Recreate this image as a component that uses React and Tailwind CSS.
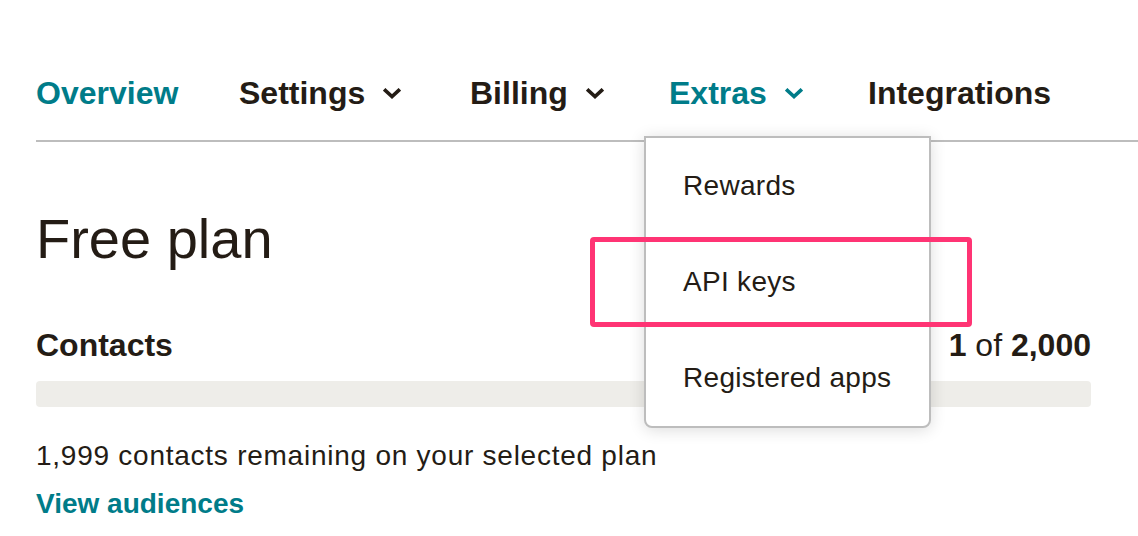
import React from "react";

const Chevron = ({ className }) => (
  <svg width="18" height="11" viewBox="0 0 18 11" className={className}>
    <polyline
      points="2.5,2.5 9,8.5 15.5,2.5"
      fill="none"
      stroke="currentColor"
      strokeWidth="3.6"
      strokeLinecap="square"
    />
  </svg>
);

const NavItem = ({ label, active, dropdown, width, children }) => (
  <div className={`relative flex items-center shrink-0 ${width}`}>
    <span className={`text-[32px] font-bold leading-[40px] ${active ? "text-[#007c89]" : "text-[#241c15]"}`}>
      {label}
    </span>
    {dropdown && (
      <Chevron className={`ml-[18px] ${active ? "text-[#007c89]" : "text-[#241c15]"}`} />
    )}
    {children}
  </div>
);

export default function App() {
  return (
    <div className="w-[1138px] h-[536px] overflow-hidden bg-white text-[#241c15]" style={{ fontFamily: '"Liberation Sans", Arial, sans-serif' }}>
      <div className="ml-[36px]">
        {/* top nav */}
        <nav className="flex items-center pt-[73px] pb-[27px] border-b-2 border-[#bdbdbd]">
          <NavItem label="Overview" active width="w-[203px]" />
          <NavItem label="Settings" dropdown width="w-[231px]" />
          <NavItem label="Billing" dropdown width="w-[199px]" />
          <NavItem label="Extras" dropdown active width="w-[199px]">
            <div className="absolute left-[-25px] top-[calc(100%+23px)] z-10 w-[287px] bg-white border-2 border-[#bdbdbd] rounded-b-[8px] shadow-[0_2px_16px_rgba(0,0,0,0.14)]">
              <div className="h-[96px] flex items-center pl-[37px] text-[28px] leading-[36px] tracking-[0.3px]">Rewards</div>
              <div className="h-[96px] flex items-center pl-[37px] text-[28px] leading-[36px] tracking-[0.3px]">API keys</div>
              <div className="h-[96px] flex items-center pl-[37px] text-[28px] leading-[36px] tracking-[0.3px]">Registered apps</div>
              {/* highlight annotation */}
              <div className="absolute left-[-56px] top-[99px] w-[382px] h-[90px] border-[5px] border-[#ff3474] rounded-[4px] pointer-events-none" />
            </div>
          </NavItem>
          <NavItem label="Integrations" width="w-auto" />
        </nav>

        <div className="w-[1055px]">
          <h1 className="mt-[67px] text-[56px] leading-[60px] font-normal">Free plan</h1>

          <div className="mt-[56px] flex items-center justify-between leading-[40px]">
            <span className="text-[32px] font-bold">Contacts</span>
            <span className="text-[32px]">
              <b>1</b> of <b>2,000</b>
            </span>
          </div>

          <div className="mt-[16px] h-[26px] rounded-[4px] bg-[#eeede9]" />

          <p className="mt-[31px] text-[28px] leading-[36px] tracking-[0.75px]">
            1,999 contacts remaining on your selected plan
          </p>
          <a href="#" className="block mt-[12px] text-[28px] leading-[36px] font-bold text-[#007c89]">
            View audiences
          </a>
        </div>
      </div>
    </div>
  );
}
